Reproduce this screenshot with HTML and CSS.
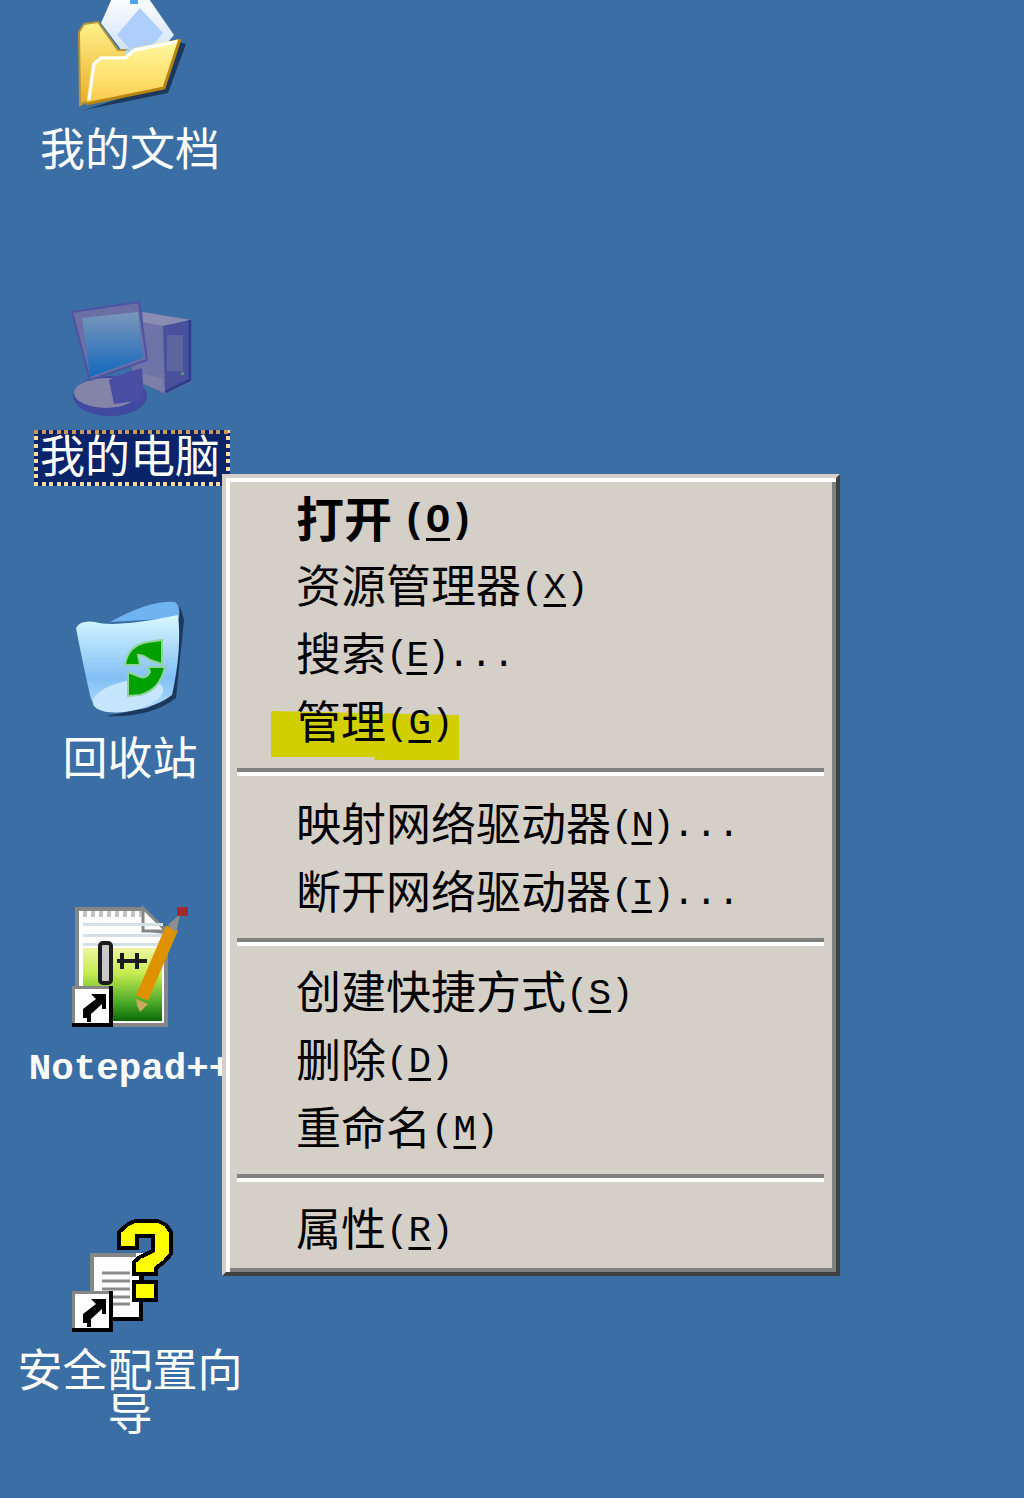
FILE: index.html
```html
<!DOCTYPE html>
<html lang="zh-CN">
<head>
<meta charset="utf-8">
<title>我的电脑</title>
<link rel="stylesheet" href="styles.css">
</head>
<body>
<main class="desktop">
  <div class="icons">
    <div class="shortcut row-docs">
      <svg class="glyph" viewBox="65 -8 130 130" aria-hidden="true">
        <defs>
          <linearGradient id="paper" x1="0" y1="0" x2="0" y2="1"><stop offset="0" stop-color="#ffffff"/><stop offset="1" stop-color="#bcd6f6"/></linearGradient>
          <linearGradient id="fback" x1="0" y1="0" x2="0" y2="1"><stop offset="0" stop-color="#fff28a"/><stop offset="1" stop-color="#e8ac28"/></linearGradient>
          <linearGradient id="ffront" x1="0" y1="0" x2="0" y2="1"><stop offset="0" stop-color="#fffaa0"/><stop offset=".6" stop-color="#ffe070"/><stop offset="1" stop-color="#fcc84a"/></linearGradient>
          <linearGradient id="screen" x1="0" y1="0" x2="0" y2="1"><stop offset="0" stop-color="#7b96bb"/><stop offset="1" stop-color="#1468bd"/></linearGradient>
          <linearGradient id="bin" x1="0" y1="0" x2="0" y2="1"><stop offset="0" stop-color="#d8f8ff"/><stop offset=".65" stop-color="#82c0f6"/><stop offset="1" stop-color="#b5defc"/></linearGradient>
          <linearGradient id="green" x1="0" y1="0" x2="0" y2="1"><stop offset="0" stop-color="#eef5a0"/><stop offset=".35" stop-color="#c6ec50"/><stop offset=".75" stop-color="#4aa828"/><stop offset="1" stop-color="#0b6a08"/></linearGradient>
          <g id="link">
            <rect x="72" y="986" width="41" height="41" fill="#ffffff"/>
            <path d="M72 986H113V1027H72ZM75 989V1023H109V989Z" fill="#868686" fill-rule="evenodd"/>
            <rect x="109" y="986" width="4" height="41" fill="#000000"/>
            <rect x="72" y="1023" width="41" height="4" fill="#000000"/>
            <path d="M91 994H106V1009H102V1004L91 1014V1022H87V1018H83V1009L96 999Z" fill="#000000"/>
          </g>
        </defs>
        <g class="soft">
          <polygon points="84,110 168,93 186,44 172,40 160,86" fill="#152a4a" opacity=".8"/>
          <polygon points="113,-4 147,-4 174,35 140,75 101,23" fill="url(#paper)"/>
          <polygon points="140,8 163,33 140,60 117,35" fill="#aecffc"/>
          <rect x="130" y="0" width="8" height="4" fill="#4aa6f0"/>
          <polygon points="79,32 84,24 98,22 118,50 128,50 128,80 80,105" fill="url(#fback)" stroke="#b3933f" stroke-width="2"/>
          <polygon points="126,50 166,44 141,76 126,62" fill="#a9dff9"/>
          <polygon points="86,104 92,63 100,56 125,56 134,48 180,39 164,88" fill="url(#ffront)"/>
          <path d="M86 104 164 88 180 39" fill="none" stroke="#b8860f" stroke-width="3"/>
          <path d="M89 100 94 64 101 58H125L135 50 176 42" fill="none" stroke="#ffffff" stroke-width="3"/>
        </g>
      </svg>
      <span class="caption">我的文档</span>
    </div>

    <div class="shortcut row-pc">
      <svg class="glyph" viewBox="65 298 130 130" aria-hidden="true">
        <g class="soft">
          <polygon points="140,312 192,320 192,382 165,394 132,378 132,320" fill="#6f74a8"/>
          <polygon points="143,312 190,320 163,326 143,322" fill="#8a8db3"/>
          <polygon points="163,326 190,320 190,380 165,392" fill="#4a509c"/>
          <path d="M190 320V380L165 392" fill="none" stroke="#2b3e8c" stroke-width="3"/>
          <polygon points="132,372 162,378 165,392 132,380" fill="#7c80a6"/>
          <rect x="167" y="335" width="16" height="36" fill="#5f659f"/>
          <ellipse cx="110" cy="396" rx="37" ry="20" fill="#4249a0"/>
          <ellipse cx="106" cy="393" rx="32" ry="15" fill="#8285a8"/>
          <polygon points="109,380 128,372 142,368 144,400 114,404" fill="#4a4ea3"/>
          <polygon points="72,312 139,302 147,360 90,380" fill="#6b6fa6" stroke="#4c55a4" stroke-width="2"/>
          <polygon points="82,318 138,312 143,358 90,377" fill="url(#screen)"/>
        </g>
        <rect x="181" y="372" width="3" height="3" fill="#4d9c5c"/>
      </svg>
      <span class="caption caption-selected">我的电脑</span>
    </div>

    <div class="shortcut row-bin">
      <svg class="glyph" viewBox="65 601 130 130" aria-hidden="true">
        <g class="soft">
          <path d="M106 716Q150 718 176 698L184 620 180 606 172 694 148 708Z" fill="#152a4a" opacity=".8"/>
          <path d="M110 622Q150 600 175 602 180 605 179 618Z" fill="#6fb3f1"/>
          <path d="M76 628Q80 620 95 622 115 628 178 615 182 650 172 695 150 712 110 712 92 708 90 695 82 660 76 628Z" fill="url(#bin)"/>
          <ellipse cx="128" cy="696" rx="36" ry="15" fill="#c5e6fd" transform="rotate(-12 128 696)"/>
        </g>
        <path d="M125 665Q128 645 148 642L162 640V664L150 660Q144 655 138 655L140 665Z" fill="#00a000" stroke="#8fd49a" stroke-width="2"/>
        <path d="M165 667Q160 690 140 695L128 696V672L138 676Q146 680 150 672L148 667Z" fill="#00a000" stroke="#8fd49a" stroke-width="2"/>
      </svg>
      <span class="caption">回收站</span>
    </div>

    <div class="shortcut row-npp">
      <svg class="glyph" viewBox="65 910 130 130" aria-hidden="true">
        <polygon points="75,907 143,907 168,930 168,1027 75,1027" fill="#868686"/>
        <polygon points="79,911 142,911 142,931 164,934 164,1023 79,1023" fill="#ffffff"/>
        <path d="M83 914H143" stroke="#c4c4c4" stroke-width="6" stroke-dasharray="4 4" fill="none"/>
        <polygon points="143,908 166,931 143,931" fill="#ffffff" stroke="#868686" stroke-width="3"/>
        <rect x="83" y="923" width="80" height="3" fill="#d5e0e6"/>
        <rect x="83" y="934" width="80" height="3" fill="#d5e0e6"/>
        <rect x="83" y="943" width="80" height="3" fill="#d5e0e6"/>
        <rect x="83" y="948" width="79" height="73" fill="url(#green)"/>
        <rect x="100" y="943" width="11" height="40" rx="3" fill="#c8c8c8" stroke="#1c1c1c" stroke-width="4"/>
        <path d="M117 961H147M122 953V969M137 953V969" stroke="#1c1c1c" stroke-width="4" fill="none"/>
        <path d="M172 928 142 998" stroke="#de9200" stroke-width="13" fill="none"/>
        <polygon points="136,999 148,1004 140,1012 137,1005" fill="#c9aa62"/>
        <polygon points="168,925 180,914 176,933" fill="#8f8f8f"/>
        <rect x="177" y="907" width="11" height="9" fill="#9c2c30"/>
        <use href="#link"/>
      </svg>
      <span class="caption caption-mono">Notepad++</span>
    </div>

    <div class="shortcut row-wiz">
      <svg class="glyph" viewBox="65 1213 130 130" aria-hidden="true">
        <rect x="90" y="1253" width="53" height="68" fill="#ffffff"/>
        <path d="M90 1253H136V1257H94V1321H90Z" fill="#868686"/>
        <path d="M139 1270H143V1321H90V1317H139Z" fill="#000000"/>
        <path d="M102 1273H130M102 1281H130M102 1289H130M102 1297H130M102 1304H130" stroke="#8a8a8a" stroke-width="3"/>
        <rect x="140" y="1274" width="4" height="8" fill="#000000"/>
        <polygon points="135,1221 158,1221 166,1225 171,1232 171,1254 164,1262 156,1268 156,1274 134,1274 134,1262 140,1257 153,1251 153,1236 137,1236 137,1248 119,1248 119,1232 127,1225" fill="#ffff00" stroke="#000000" stroke-width="4" stroke-linejoin="miter" shape-rendering="crispEdges"/>
        <rect x="134" y="1282" width="22" height="18" fill="#ffff00" stroke="#000000" stroke-width="4"/>
        <use href="#link" transform="translate(0 305)"/>
      </svg>
      <span class="caption">安全配置向导</span>
    </div>
  </div>

  <nav class="menu">
    <div class="item item-default">打开<span class="lat">(<u>O</u>)</span></div>
    <div class="item">资源管理器<span class="lat">(<u>X</u>)</span></div>
    <div class="item">搜索<span class="lat lat-tight">(<u>E</u>)</span><span class="lat">...</span></div>
    <div class="item item-marked">管理<span class="lat">(<u>G</u>)</span></div>
    <div class="sep"></div>
    <div class="item">映射网络驱动器<span class="lat lat-tight">(<u>N</u>)</span><span class="lat">...</span></div>
    <div class="item">断开网络驱动器<span class="lat lat-tight">(<u>I</u>)</span><span class="lat">...</span></div>
    <div class="sep sep-tight"></div>
    <div class="item">创建快捷方式<span class="lat">(<u>S</u>)</span></div>
    <div class="item">删除<span class="lat">(<u>D</u>)</span></div>
    <div class="item">重命名<span class="lat">(<u>M</u>)</span></div>
    <div class="sep sep-mid"></div>
    <div class="item">属性<span class="lat">(<u>R</u>)</span></div>
  </nav>
</main>
</body>
</html>
```

FILE: styles.css
```css
* {
  box-sizing: border-box;
}

html,
body {
  margin: 0;
  height: 1498px;
  overflow: hidden;
  background: #3a6ea5;
}

.desktop {
  position: relative;
  width: 1024px;
  height: 1498px;
  overflow: hidden;
  font-family: "Noto Sans CJK SC", sans-serif;
  font-size: 45px;
}

.icons {
  display: grid;
  grid-template-columns: 260px;
  grid-template-rows: 306px 303px 309px 303px auto;
  margin-top: -8px;
}

.shortcut {
  display: flex;
  flex-direction: column;
  align-items: center;
}

.glyph {
  display: block;
  width: 130px;
  height: 130px;
  flex: none;
  overflow: visible;
}

.soft {
  filter: blur(0.6px);
}

.caption {
  display: block;
  max-width: 240px;
  margin-top: 3px;
  color: #ffffff;
  line-height: 44px;
  text-align: center;
}

.caption-mono {
  margin-top: 7px;
  white-space: nowrap;
  font-family: "Liberation Mono", monospace;
  font-size: 37.5px;
  font-weight: 700;
}

.caption-selected {
  margin-top: 2px;
  margin-left: 4px;
  padding: 2px 10px 10px 6px;
  background-color: #0a246a;
  background-image:
    repeating-linear-gradient(90deg, #c99a5c 0 4px, transparent 4px 7.6px),
    repeating-linear-gradient(90deg, #fbdca0 0 4px, transparent 4px 7.6px),
    repeating-linear-gradient(0deg, #fbdca0 0 4px, transparent 4px 7.6px),
    repeating-linear-gradient(0deg, #fbdca0 0 4px, transparent 4px 7.6px);
  background-position: 0 0, 0 100%, 0 0, 100% 0;
  background-size: 100% 4px, 100% 4px, 4px 100%, 4px 100%;
  background-repeat: no-repeat;
}

.menu {
  position: absolute;
  top: 474px;
  left: 222px;
  isolation: isolate;
  width: 618px;
  padding: 6px 12px 9px 11px;
  border: 4px solid;
  border-color: #d4d0c8 #404040 #404040 #d4d0c8;
  background: #d4d0c8;
  box-shadow: inset 4px 4px 0 #ffffff, inset -4px -4px 0 #808080;
  color: #000000;
}

.item {
  position: relative;
  height: 68px;
  padding-left: 59px;
  line-height: 64px;
  white-space: nowrap;
}

.item-default {
  font-size: 48px;
  font-weight: 700;
}

.item-marked::before {
  content: "";
  position: absolute;
  z-index: -1;
  top: 23px;
  left: 34px;
  width: 188px;
  height: 49px;
  background: #d2cf00;
  clip-path: polygon(0 0, 100% 8%, 100% 100%, 55% 100%, 55% 94%, 0 94%);
}

.lat {
  vertical-align: 5px;
  font-family: "Liberation Mono", monospace;
  font-size: 37.5px;
}

.lat-tight {
  letter-spacing: -2px;
}

.item-default .lat {
  margin-left: 10px;
  font-size: 40px;
}

.lat u {
  text-decoration-thickness: 3px;
  text-underline-offset: 6px;
}

.sep {
  height: 8px;
  margin: 12px 0 14px;
  border-top: 4px solid #808080;
  border-bottom: 4px solid #ffffff;
}

.sep-tight {
  margin-bottom: 12px;
}

.sep-mid {
  margin-bottom: 13px;
}
```
